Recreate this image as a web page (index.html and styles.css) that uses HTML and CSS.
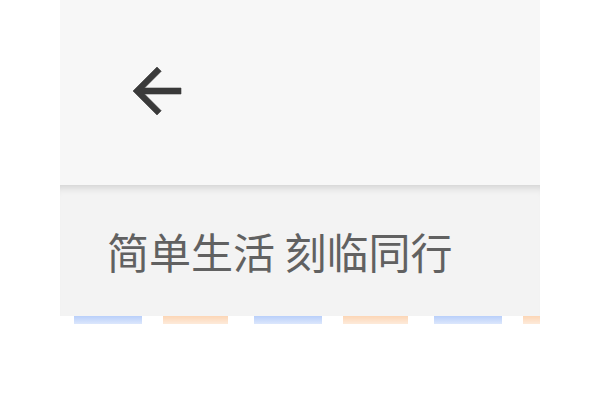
FILE: index.html
```html
<!DOCTYPE html>
<html lang="zh-CN">
<head>
<meta charset="utf-8">
<link rel="stylesheet" href="styles.css">
</head>
<body>
<div class="page">
  <header class="nav">
    <button class="back" aria-label="返回">
      <svg viewBox="0 0 24 24" width="72" height="72"><path d="M20 11H7.83l5.59-5.59L12 4l-8 8 8 8 1.41-1.41L7.83 13H20v-2z" fill="#3a3a3a" stroke="#3a3a3a" stroke-width="0.2"/></svg>
    </button>
  </header>
  <section class="slogan">
    <p class="slogan-text">简单生活 刻临同行</p>
  </section>
  <div class="airmail"></div>
</div>
</body>
</html>
```
FILE: styles.css
```css
html, body {
  margin: 0;
  padding: 0;
  background: #ffffff;
}
.page {
  width: 480px;
  margin-left: 60px;
  overflow: hidden;
}
.nav {
  height: 185px;
  background: #f7f7f7;
  display: flex;
  align-items: center;
  padding-left: 61px;
  box-sizing: border-box;
}
.back {
  border: 0;
  padding: 0;
  margin: -3px 0 0 0;
  background: none;
  width: 72px;
  height: 72px;
  display: block;
}
.back svg {
  display: block;
}
.slogan {
  height: 131px;
  background: #f3f3f3;
  box-shadow: inset 0 9px 9px -7px rgba(0, 0, 0, 0.16);
  display: flex;
  align-items: center;
  padding-left: 47px;
  box-sizing: border-box;
}
.slogan-text {
  margin: 0;
  font-family: "Noto Sans CJK SC", "Noto Sans", sans-serif;
  font-size: 42px;
  line-height: 1;
  color: #616161;
}
.airmail {
  height: 8px;
  filter: blur(0.6px);
  background-image:
    linear-gradient(to bottom, rgba(255,255,255,0) 0%, rgba(255,255,255,0.5) 100%),
    linear-gradient(to right,
      #b9cffa 0px, #b9cffa 68px,
      transparent 68px, transparent 89px,
      #fcd6b6 89px, #fcd6b6 154px,
      transparent 154px, transparent 180px);
  background-size: 100% 100%, 180px 100%;
  background-position: 0 0, 14px 0;
  background-repeat: no-repeat, repeat-x;
}
```
